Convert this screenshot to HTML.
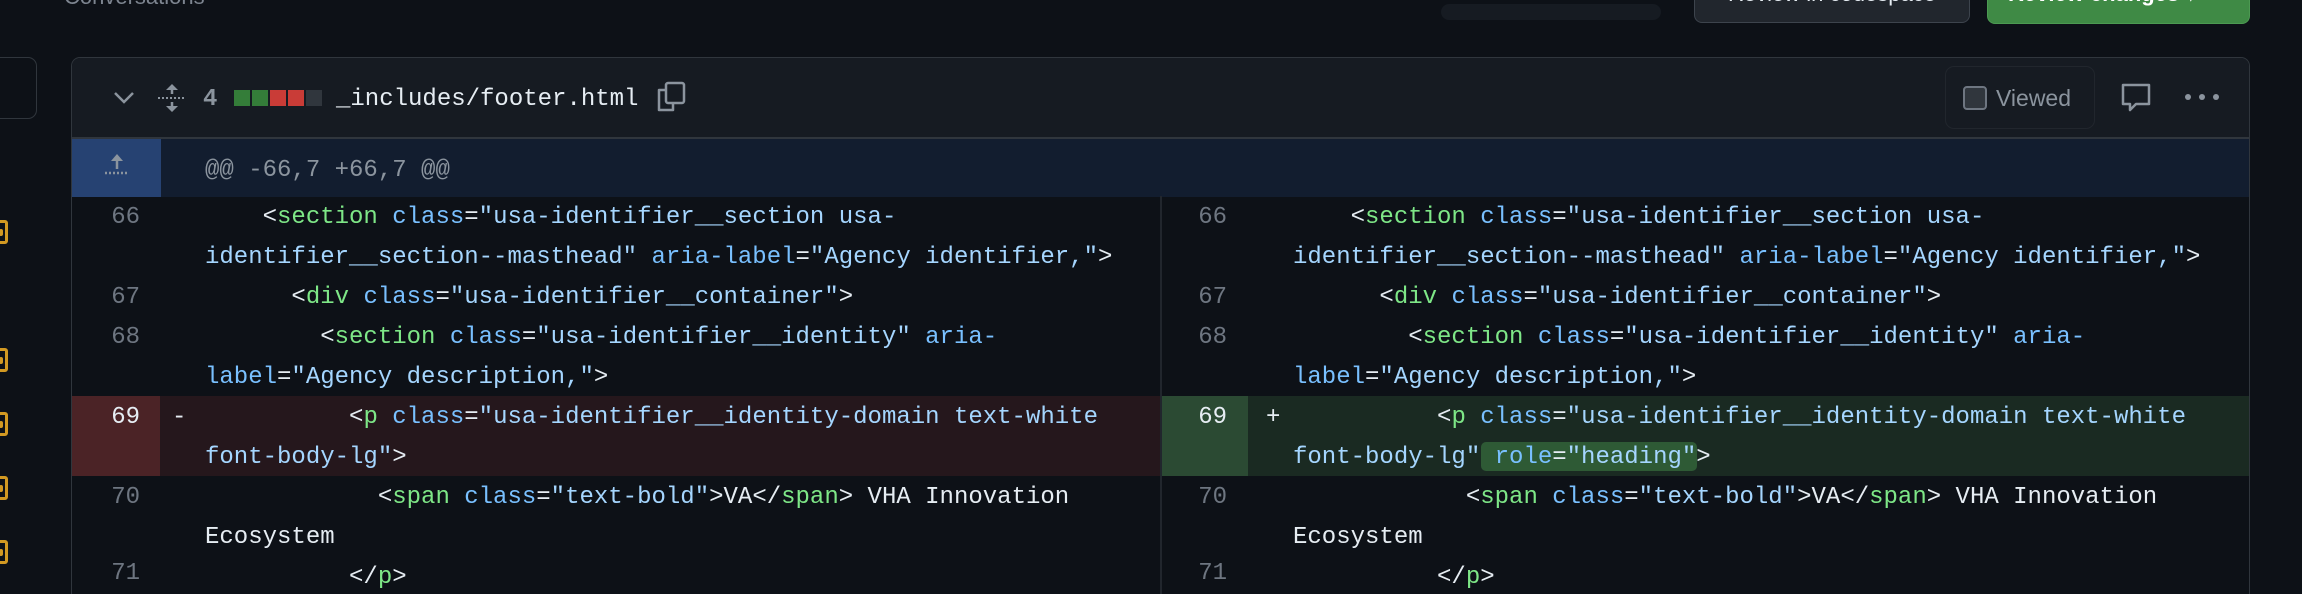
<!DOCTYPE html>
<html><head><meta charset="utf-8"><style>
*{margin:0;padding:0;box-sizing:border-box}
html,body{width:2302px;height:594px;overflow:hidden}
body{background:#0d1117;position:relative;font-family:"Liberation Sans",sans-serif}
.abs{position:absolute}
.mono{font-family:"Liberation Mono",monospace;font-size:24px}
.code{position:absolute;white-space:pre;line-height:40px;color:#e6edf3;font-family:"Liberation Mono",monospace;font-size:24px}
.ln{position:absolute;text-align:right;line-height:40px;color:#6e7681;font-family:"Liberation Mono",monospace;font-size:24px}
.t{color:#7ee787}.a{color:#79c0ff}.s{color:#a5d6ff}
.yi{position:absolute;left:-6px;width:14px;height:24px;border:3px solid #d29922;border-radius:3px}
.yi:after{content:"";position:absolute;left:2px;top:6px;width:4px;height:7px;background:#d29922;border-radius:2px}
</style></head><body>
<!-- top bar -->
<div class="abs" style="left:64px;top:-16px;font-size:22px;color:#7d8590">Conversations</div>
<div class="abs" style="left:1441px;top:4px;width:220px;height:16px;background:#161b22;border-radius:8px"></div>
<div class="abs" style="left:1694px;top:-20px;width:276px;height:43px;background:#21262d;border:1px solid #3d444d;border-radius:8px;color:#e6edf3;font-size:22px;text-align:center;line-height:26px">Review in codespace</div>
<div class="abs" style="left:1987px;top:-20px;width:263px;height:44px;background:#3f8a45;border:1px solid #4c9a52;border-radius:8px;color:#fff;font-size:22px;font-weight:bold;padding-left:20px;line-height:26px">Review changes ▾</div>
<!-- left sidebar -->
<div class="abs" style="left:-20px;top:57px;width:57px;height:62px;border:1px solid #30363d;border-radius:9px"></div>
<div class="yi" style="top:220px"></div><div class="yi" style="top:348px"></div><div class="yi" style="top:412px"></div><div class="yi" style="top:476px"></div><div class="yi" style="top:540px"></div>
<!-- container -->
<div class="abs" style="left:71px;top:57px;width:2179px;height:537px;border:1px solid #30363d;border-bottom:none;border-radius:9px 9px 0 0;overflow:hidden;background:#0d1117">
 <div class="abs" style="left:0;top:0;width:2179px;height:81px;background:#161b22;border-bottom:2px solid #30363d"></div>
 <div class="abs" style="left:0;top:81px;width:2179px;height:58px;background:#121d2f"></div>
 <div class="abs" style="left:0;top:81px;width:89px;height:58px;background:#264272"></div>
</div>
<!-- header contents -->
<svg class="abs" style="left:112px;top:90px" width="24" height="16" viewBox="0 0 24 16"><path d="M3 3l9 9 9-9" stroke="#8b949e" stroke-width="2.5" fill="none"/></svg>
<svg class="abs" style="left:157px;top:82px" width="30" height="32" viewBox="0 0 30 32"><path d="M15 2l-6 6h12z M15 30l-6-6h12z" fill="#8b949e"/><path d="M15 6v6M15 20v6" stroke="#8b949e" stroke-width="2.5"/><path d="M1 16h28" stroke="#8b949e" stroke-width="2" stroke-dasharray="2 2"/></svg>
<div class="abs mono" style="left:203px;top:85px;color:#8b949e;font-weight:bold;line-height:30px">4</div>
<div class="abs" style="left:234px;top:90px;width:16px;height:16px;background:#347d39"></div>
<div class="abs" style="left:252px;top:90px;width:16px;height:16px;background:#347d39"></div>
<div class="abs" style="left:270px;top:90px;width:16px;height:16px;background:#c93c37"></div>
<div class="abs" style="left:288px;top:90px;width:16px;height:16px;background:#c93c37"></div>
<div class="abs" style="left:306px;top:90px;width:16px;height:16px;background:#30363d"></div>
<div class="abs mono" style="left:336px;top:85px;color:#e6edf3;line-height:30px">_includes/footer.html</div>
<svg class="abs" style="left:655px;top:80px" width="34" height="34" viewBox="0 0 34 34"><path d="M10 10H4v20h14v-6" stroke="#8b949e" stroke-width="2.5" fill="none" stroke-linejoin="round"/><rect x="11" y="3" width="18" height="20" rx="2" stroke="#8b949e" stroke-width="2.5" fill="none"/></svg>
<div class="abs" style="left:1945px;top:66px;width:150px;height:63px;border:1px solid #21262d;border-radius:9px"></div>
<div class="abs" style="left:1963px;top:86px;width:24px;height:24px;border:2px solid #6e7681;border-radius:4px;background:#30363d"></div>
<div class="abs" style="left:1996px;top:83px;font-size:23px;color:#8b949e;line-height:30px">Viewed</div>
<svg class="abs" style="left:2120px;top:82px" width="32" height="32" viewBox="0 0 32 32"><path d="M3 3h26v19H16l-6 6v-6H3z" stroke="#8b949e" stroke-width="2.5" fill="none" stroke-linejoin="round"/></svg>
<svg class="abs" style="left:2184px;top:91px" width="36" height="12"><circle cx="4" cy="6" r="3" fill="#8b949e"/><circle cx="18" cy="6" r="3" fill="#8b949e"/><circle cx="32" cy="6" r="3" fill="#8b949e"/></svg>
<!-- hunk -->
<svg class="abs" style="left:103px;top:152px" width="28" height="24"><path d="M14 2l-6 7h12z" fill="#8b949e"/><path d="M14 8v9" stroke="#8b949e" stroke-width="2.5"/><path d="M2 21h24" stroke="#8b949e" stroke-width="2.5" stroke-dasharray="2 2"/></svg>
<div class="code" style="left:205px;top:151px;color:#8b949e">@@ -66,7 +66,7 @@</div>
<!-- rows bg -->
<div class="abs" style="left:72px;top:396px;width:1088px;height:80px;background:#25171c"></div>
<div class="abs" style="left:72px;top:396px;width:88px;height:80px;background:#4b2326"></div>
<div class="abs" style="left:1162px;top:396px;width:1087px;height:80px;background:#1a2a22"></div>
<div class="abs" style="left:1162px;top:396px;width:86px;height:80px;background:#2b4a33"></div>
<div class="abs" style="left:1481px;top:442px;width:216px;height:29px;background:#2e5a35;border-radius:5px"></div>
<div class="abs" style="left:1160px;top:196px;width:2px;height:398px;background:#21262d"></div>
<!-- line numbers -->
<div class="ln" style="left:72px;width:68px;top:198px">66</div>
<div class="ln" style="left:72px;width:68px;top:278px">67</div>
<div class="ln" style="left:72px;width:68px;top:318px">68</div>
<div class="ln" style="left:72px;width:68px;top:398px;color:#e6edf3">69</div>
<div class="ln" style="left:72px;width:68px;top:478px">70</div>
<div class="ln" style="left:72px;width:68px;top:554px;line-height:40px;height:40px;overflow:hidden">71</div>
<div class="ln" style="left:1162px;width:65px;top:198px">66</div>
<div class="ln" style="left:1162px;width:65px;top:278px">67</div>
<div class="ln" style="left:1162px;width:65px;top:318px">68</div>
<div class="ln" style="left:1162px;width:65px;top:398px;color:#e6edf3">69</div>
<div class="ln" style="left:1162px;width:65px;top:478px">70</div>
<div class="ln" style="left:1162px;width:65px;top:554px;height:40px;overflow:hidden">71</div>
<div class="code" style="left:172px;top:398px">-</div>
<div class="code" style="left:1266px;top:398px">+</div>
<!-- left code -->
<div class="code" style="left:205px;top:198px;height:396px;overflow:hidden">    &lt;<span class="t">section</span> <span class="a">class</span>=<span class="s">"usa-identifier__section usa-</span>
<span class="s">identifier__section--masthead"</span> <span class="a">aria-label</span>=<span class="s">"Agency identifier,"</span>&gt;
      &lt;<span class="t">div</span> <span class="a">class</span>=<span class="s">"usa-identifier__container"</span>&gt;
        &lt;<span class="t">section</span> <span class="a">class</span>=<span class="s">"usa-identifier__identity"</span> <span class="a">aria-</span>
<span class="a">label</span>=<span class="s">"Agency description,"</span>&gt;
          &lt;<span class="t">p</span> <span class="a">class</span>=<span class="s">"usa-identifier__identity-domain text-white</span>
<span class="s">font-body-lg"</span>&gt;
            &lt;<span class="t">span</span> <span class="a">class</span>=<span class="s">"text-bold"</span>&gt;VA&lt;/<span class="t">span</span>&gt; VHA Innovation
Ecosystem
          &lt;/<span class="t">p</span>&gt;</div>
<!-- right code -->
<div class="code" style="left:1293px;top:198px;height:396px;overflow:hidden">    &lt;<span class="t">section</span> <span class="a">class</span>=<span class="s">"usa-identifier__section usa-</span>
<span class="s">identifier__section--masthead"</span> <span class="a">aria-label</span>=<span class="s">"Agency identifier,"</span>&gt;
      &lt;<span class="t">div</span> <span class="a">class</span>=<span class="s">"usa-identifier__container"</span>&gt;
        &lt;<span class="t">section</span> <span class="a">class</span>=<span class="s">"usa-identifier__identity"</span> <span class="a">aria-</span>
<span class="a">label</span>=<span class="s">"Agency description,"</span>&gt;
          &lt;<span class="t">p</span> <span class="a">class</span>=<span class="s">"usa-identifier__identity-domain text-white</span>
<span class="s">font-body-lg"</span> <span class="a">role</span>=<span class="s">"heading"</span>&gt;
            &lt;<span class="t">span</span> <span class="a">class</span>=<span class="s">"text-bold"</span>&gt;VA&lt;/<span class="t">span</span>&gt; VHA Innovation
Ecosystem
          &lt;/<span class="t">p</span>&gt;</div>
</body></html>
